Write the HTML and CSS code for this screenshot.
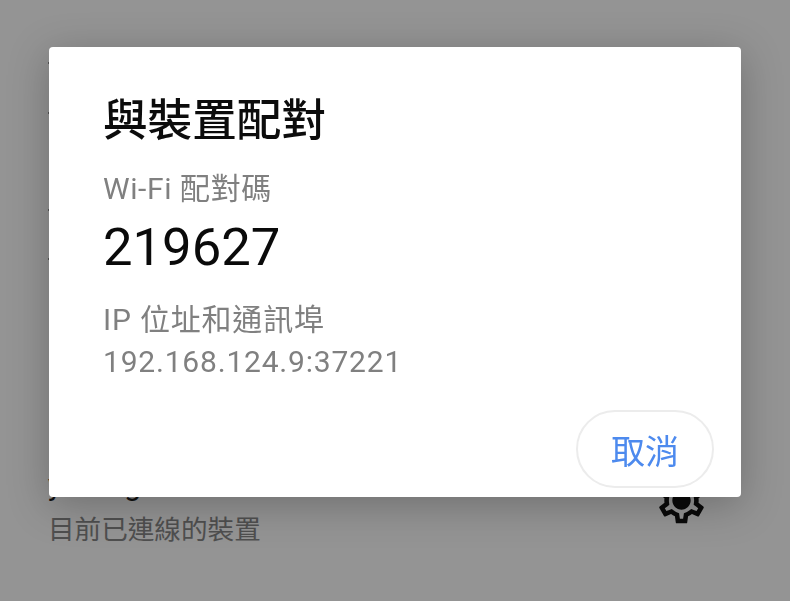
FILE: index.html
```html
<!DOCTYPE html>
<html lang="zh-Hant">
<head>
<meta charset="utf-8">
<title>與裝置配對</title>
<link rel="stylesheet" href="styles.css">
</head>
<body>
<div class="screen">
  <main class="page">
    <div class="ticks">
      <span class="tick"></span>
      <span class="tick tick-wide"></span>
      <span class="tick tick-far"></span>
      <span class="tick tick-wide"></span>
    </div>
    <div class="device">
      <div class="device-text">
        <div class="device-name">yoon g</div>
        <div class="device-status">目前已連線的裝置</div>
      </div>
      <svg class="gear" viewBox="0 0 24 24" aria-hidden="true"><path d="M19.43 12.98c.04-.32.07-.64.07-.98 0-.34-.03-.66-.07-.98l2.11-1.65c.19-.15.24-.42.12-.64l-2-3.46c-.09-.16-.26-.25-.44-.25-.06 0-.12.02-.17.04l-2.49 1c-.52-.4-1.08-.73-1.69-.98l-.38-2.65C14.46 2.18 14.25 2 14 2h-4c-.25 0-.46.18-.49.42l-.38 2.65c-.61.25-1.17.59-1.69.98l-2.49-1c-.06-.02-.12-.04-.18-.04-.17 0-.34.09-.43.25l-2 3.46c-.13.22-.07.49.12.64l2.11 1.65c-.04.32-.07.65-.07.98 0 .33.03.66.07.98l-2.11 1.65c-.19.15-.24.42-.12.64l2 3.46c.09.16.26.25.44.25.06 0 .12-.02.17-.04l2.49-1c.52.4 1.08.73 1.69.98l.38 2.65c.03.24.24.42.49.42h4c.25 0 .46-.18.49-.42l.38-2.65c.61-.25 1.17-.59 1.69-.98l2.49 1c.06.02.12.04.18.04.17 0 .34-.09.43-.25l2-3.46c.12-.22.07-.49-.12-.64l-2.11-1.65zm-1.98-1.71c.04.31.05.52.05.73 0 .21-.02.43-.05.73l-.14 1.13.89.7 1.08.84-.7 1.21-1.27-.51-1.04-.42-.9.68c-.43.32-.84.56-1.25.73l-1.06.43-.16 1.13-.2 1.35h-1.4l-.19-1.35-.16-1.13-1.06-.43c-.43-.18-.83-.41-1.23-.71l-.91-.7-1.06.43-1.27.51-.7-1.21 1.08-.84.89-.7-.14-1.13c-.03-.31-.05-.54-.05-.74s.02-.43.05-.73l.14-1.13-.89-.7-1.08-.84.7-1.21 1.27.51 1.04.42.9-.68c.43-.32.84-.56 1.25-.73l1.06-.43.16-1.13.2-1.35h1.39l.19 1.35.16 1.13 1.06.43c.43.18.83.41 1.23.71l.91.7 1.06-.43 1.27-.51.7 1.21-1.07.85-.89.7.14 1.13zM12 8c-2.21 0-4 1.79-4 4s1.79 4 4 4 4-1.79 4-4-1.79-4-4-4z"/></svg>
    </div>
  </main>
  <section class="dialog" role="dialog">
    <h1 class="dialog-title">與裝置配對</h1>
    <div class="label">Wi-Fi 配對碼</div>
    <div class="code">219627</div>
    <div class="label label-wide label-ip">IP 位址和通訊埠</div>
    <div class="label label-wide">192.168.124.9:37221</div>
    <div class="actions"><button class="cancel" type="button">取消</button></div>
  </section>
</div>
</body>
</html>
```
FILE: styles.css
```css
* { box-sizing: border-box; }
html, body { margin: 0; padding: 0; }
body {
  background: #949494;
  font-family: Roboto, "Noto Sans CJK TC", sans-serif;
}
.screen {
  position: relative;
  width: 790px;
  height: 601px;
  overflow: hidden;
  background: #949494;
}
.page {
  display: flex;
  flex-direction: column;
  padding: 62px 0 0 48px;
  height: 100%;
}
.ticks {
  display: flex;
  flex-direction: column;
  height: 198px;
  flex: none;
}
.tick {
  display: block;
  width: 2px;
  height: 2px;
  background: #555;
  flex: none;
}
.tick + .tick { margin-top: 48px; }
.tick-far + .tick { margin-top: 47px; }
.tick-wide + .tick-far { margin-top: 95px; }
.device {
  display: flex;
  justify-content: space-between;
  align-items: flex-start;
  margin-top: 205px;
  padding-right: 81px;
}
.device-name {
  font-size: 30px;
  line-height: 40px;
  color: #111;
  word-spacing: 4px;
}
.device-status {
  font-size: 26.6px;
  line-height: 38px;
  color: #4f4f4f;
  margin-top: 6px;
}
.gear {
  width: 55px;
  height: 55px;
  fill: #0a0a0a;
  flex: none;
  margin-top: 8px;
}
.dialog {
  position: absolute;
  left: 49px;
  top: 47px;
  width: 692px;
  height: 450px;
  background: #fff;
  border-radius: 4px;
  box-shadow: 0 8px 40px rgba(0, 0, 0, 0.25);
  padding: 49px 27px 0 54px;
  display: flex;
  flex-direction: column;
  will-change: transform;
}
.dialog-title {
  margin: 0;
  font-size: 44.6px;
  line-height: 50px;
  font-weight: 500;
  color: #0c0c0c;
}
.label {
  font-size: 30px;
  line-height: 42px;
  letter-spacing: 0.6px;
  color: #808080;
}
.label-wide { letter-spacing: 0.8px; }
.dialog-title + .label { margin-top: 22px; }
.code {
  font-size: 52.6px;
  line-height: 60px;
  color: #0a0a0a;
  margin-top: 7px;
}
.label-ip { margin-top: 22px; }
.actions {
  margin-top: auto;
  margin-bottom: 9px;
  display: flex;
  justify-content: flex-end;
}
.cancel {
  width: 138px;
  height: 78px;
  border: 2px solid #ececec;
  border-radius: 39px;
  background: #fff;
  color: #4d8aee;
  font: 400 34px Roboto, "Noto Sans CJK TC", sans-serif;
  padding: 0;
}
```
